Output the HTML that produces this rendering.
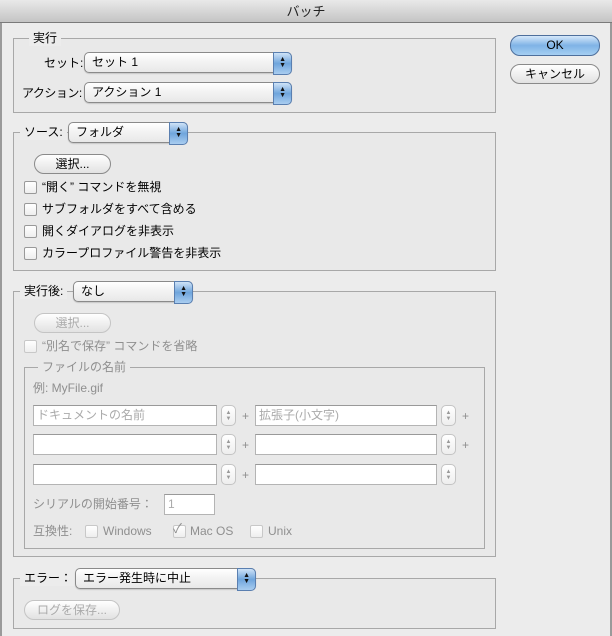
<!DOCTYPE html><html><head><meta charset="utf-8"><style>
*{box-sizing:border-box}
body{margin:0;width:612px;height:636px;overflow:hidden;background:#ececec;font-family:"Liberation Sans","Noto Sans CJK JP",sans-serif;font-size:12px;color:#000;position:relative}
.a{position:absolute;white-space:nowrap;line-height:16px}
.title{position:absolute;left:0;top:0;width:612px;height:23px;background:linear-gradient(#e9e9e9,#c4c4c4);border-bottom:1px solid #7a7a7a;text-align:center;line-height:23px;font-size:13px;color:#222}
.box{position:absolute;border:1px solid #a8a8a8;background:#e9e9e9}
.lbl{position:absolute;background:#ececec;padding:0 4px;line-height:16px;white-space:nowrap}
.pop{position:absolute;height:21px;border:1px solid #8a8a8a;border-radius:5px;background:linear-gradient(#fff,#f2f2f2 50%,#e8e8e8);line-height:19px;padding-left:7px;box-shadow:0 1px 1px rgba(0,0,0,.15)}
.pop:after{content:"";position:absolute;right:-1px;top:-1px;width:17px;height:21px;border-radius:0 5px 5px 0;background:linear-gradient(#cfe3f7,#6fa5dc 50%,#a9cdf0);border:1px solid #5a7fb0}
.pop i{position:absolute;right:5px;top:4px;z-index:2;font-style:normal;font-size:7px;line-height:6px;color:#111}
.btn{position:absolute;height:20px;border:1px solid #8a8a8a;border-radius:10px;background:linear-gradient(#fff,#f0f0f0 50%,#e2e2e2);text-align:center;line-height:18px}
.dis{color:#aaa;border-color:#c4c4c4}
.cb{position:absolute;width:13px;height:13px;border:1px solid #999;border-radius:2px;background:linear-gradient(#fff,#eee)}
.cb.d{border-color:#c8c8c8}
.tf{position:absolute;height:21px;border:1px solid #b4b4b4;border-top-color:#999;background:#fff;padding-left:3px;line-height:19px;color:#aaa}
.st{position:absolute;width:15px;height:21px;border:1px solid #c4c4c4;border-radius:5px;background:linear-gradient(#fff,#eee);font-size:6px;line-height:6px;text-align:center;color:#999;padding-top:4px}
.g{color:#8f8f8f}
.edge{position:absolute;top:0;width:2px;height:636px;background:#9a9a9a}
</style></head><body>
<div class="edge" style="left:0"></div><div class="edge" style="right:0"></div>
<div class="title">バッチ</div>

<div class="box" style="left:13px;top:38px;width:483px;height:75px"></div>
<div class="lbl" style="left:29px;top:30px">実行</div>
<div class="a" style="left:44px;top:55px">セット:</div>
<div class="pop" style="left:84px;top:52px;width:208px">セット 1<i>▲<br>▼</i></div>
<div class="a" style="left:22px;top:85px;letter-spacing:-0.5px">アクション:</div>
<div class="pop" style="left:84px;top:82px;width:208px">アクション 1<i>▲<br>▼</i></div>

<div class="btn" style="left:510px;top:35px;width:90px;height:21px;background:linear-gradient(#d6e8fa,#7fb3e6 50%,#a5cff2);border-color:#4e6f9c">OK</div>
<div class="btn" style="left:510px;top:64px;width:90px">キャンセル</div>

<div class="box" style="left:13px;top:132px;width:483px;height:139px"></div>
<div class="lbl" style="left:20px;top:124px">ソース:</div>
<div class="pop" style="left:68px;top:122px;width:120px">フォルダ<i>▲<br>▼</i></div>
<div class="btn" style="left:34px;top:154px;width:77px">選択...</div>
<div class="cb" style="left:24px;top:181px"></div><div class="a" style="left:42px;top:179px">“開く” コマンドを無視</div>
<div class="cb" style="left:24px;top:203px"></div><div class="a" style="left:42px;top:201px">サブフォルダをすべて含める</div>
<div class="cb" style="left:24px;top:225px"></div><div class="a" style="left:42px;top:223px">開くダイアログを非表示</div>
<div class="cb" style="left:24px;top:247px"></div><div class="a" style="left:42px;top:245px">カラープロファイル警告を非表示</div>

<div class="box" style="left:13px;top:291px;width:483px;height:266px"></div>
<div class="lbl" style="left:20px;top:283px">実行後:</div>
<div class="pop" style="left:73px;top:281px;width:120px">なし<i>▲<br>▼</i></div>
<div class="btn dis" style="left:34px;top:313px;width:77px">選択...</div>
<div class="cb d" style="left:24px;top:340px"></div><div class="a g" style="left:42px;top:338px">“別名で保存” コマンドを省略</div>

<div class="box" style="left:24px;top:367px;width:461px;height:182px"></div>
<div class="lbl g" style="left:38px;top:359px;background:#e9e9e9">ファイルの名前</div>
<div class="a g" style="left:33px;top:380px">例: MyFile.gif</div>

<div class="tf" style="left:33px;top:405px;width:184px">ドキュメントの名前</div><div class="st" style="left:221px;top:405px">▲<br>▼</div><div class="a g" style="left:242px;top:408px">+</div>
<div class="tf" style="left:255px;top:405px;width:182px">拡張子(小文字)</div><div class="st" style="left:441px;top:405px">▲<br>▼</div><div class="a g" style="left:462px;top:408px">+</div>
<div class="tf" style="left:33px;top:434px;width:184px"></div><div class="st" style="left:221px;top:434px">▲<br>▼</div><div class="a g" style="left:242px;top:437px">+</div>
<div class="tf" style="left:255px;top:434px;width:182px"></div><div class="st" style="left:441px;top:434px">▲<br>▼</div><div class="a g" style="left:462px;top:437px">+</div>
<div class="tf" style="left:33px;top:464px;width:184px"></div><div class="st" style="left:221px;top:464px">▲<br>▼</div><div class="a g" style="left:242px;top:467px">+</div>
<div class="tf" style="left:255px;top:464px;width:182px"></div><div class="st" style="left:441px;top:464px">▲<br>▼</div>

<div class="a g" style="left:33px;top:496px">シリアルの開始番号：</div>
<div class="tf" style="left:164px;top:494px;width:51px">1</div>
<div class="a g" style="left:33px;top:523px">互換性:</div>
<div class="cb d" style="left:85px;top:525px"></div><div class="a g" style="left:103px;top:523px">Windows</div>
<div class="cb d" style="left:173px;top:525px"></div><div class="a g" style="left:173px;top:521px;font-size:13px">✓</div><div class="a g" style="left:190px;top:523px">Mac OS</div>
<div class="cb d" style="left:250px;top:525px"></div><div class="a g" style="left:268px;top:523px">Unix</div>

<div class="box" style="left:13px;top:578px;width:483px;height:51px"></div>
<div class="lbl" style="left:20px;top:570px">エラー：</div>
<div class="pop" style="left:75px;top:568px;width:181px">エラー発生時に中止<i>▲<br>▼</i></div>
<div class="btn dis" style="left:24px;top:600px;width:96px">ログを保存...</div>
</body></html>
